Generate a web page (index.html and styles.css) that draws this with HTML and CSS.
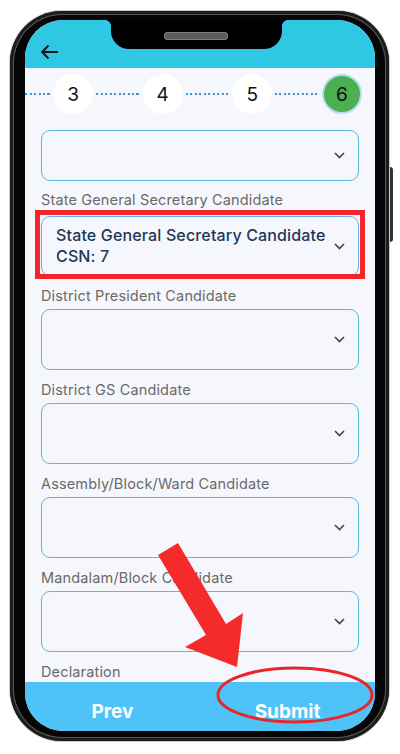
FILE: index.html
```html
<!DOCTYPE html>
<html lang="en">
<head>
    <meta charset="UTF-8">
    <meta name="viewport" content="width=device-width, initial-scale=1.0">
    <title>Candidate Nomination</title>
    <link rel="stylesheet" href="styles.css">
</head>
<body>

<div class="phone">
    <div class="side-button"></div>
    <div class="screen">
        <div class="notch"><span class="speaker"></span></div>

        <div class="app-header">
            <svg class="back" width="19" height="16" viewBox="0 0 19 16">
                <path d="M18 8 H2 M8.5 1.5 L2 8 L8.5 14.5" fill="none" stroke="#111" stroke-width="1.8"/>
            </svg>
        </div>

        <div class="steps">
            <span class="line line-first"></span>
            <span class="step">3</span>
            <span class="line"></span>
            <span class="step">4</span>
            <span class="line"></span>
            <span class="step">5</span>
            <span class="line"></span>
            <span class="step step-active">6</span>
        </div>

        <div class="form">
            <div class="select select-short">
                <span class="value"></span>
                <svg class="chevron" width="11" height="7" viewBox="0 0 11 7"><path d="M1 1 L5.5 5.5 L10 1" fill="none" stroke="#444" stroke-width="1.6"/></svg>
            </div>

            <label class="field-label field-label-gap">State General Secretary Candidate</label>
            <div class="select select-filled highlight">
                <span class="value">State General Secretary Candidate<br>CSN: 7</span>
                <svg class="chevron" width="11" height="7" viewBox="0 0 11 7"><path d="M1 1 L5.5 5.5 L10 1" fill="none" stroke="#444" stroke-width="1.6"/></svg>
            </div>

            <label class="field-label">District President Candidate</label>
            <div class="select">
                <span class="value"></span>
                <svg class="chevron" width="11" height="7" viewBox="0 0 11 7"><path d="M1 1 L5.5 5.5 L10 1" fill="none" stroke="#444" stroke-width="1.6"/></svg>
            </div>

            <label class="field-label">District GS Candidate</label>
            <div class="select">
                <span class="value"></span>
                <svg class="chevron" width="11" height="7" viewBox="0 0 11 7"><path d="M1 1 L5.5 5.5 L10 1" fill="none" stroke="#444" stroke-width="1.6"/></svg>
            </div>

            <label class="field-label">Assembly/Block/Ward Candidate</label>
            <div class="select">
                <span class="value"></span>
                <svg class="chevron" width="11" height="7" viewBox="0 0 11 7"><path d="M1 1 L5.5 5.5 L10 1" fill="none" stroke="#444" stroke-width="1.6"/></svg>
            </div>

            <label class="field-label">Mandalam/Block Candidate</label>
            <div class="select">
                <span class="value"></span>
                <svg class="chevron" width="11" height="7" viewBox="0 0 11 7"><path d="M1 1 L5.5 5.5 L10 1" fill="none" stroke="#444" stroke-width="1.6"/></svg>
            </div>

            <label class="field-label">Declaration</label>
        </div>

        <div class="bottom-bar">
            <button class="bar-btn">Prev</button>
            <button class="bar-btn">Submit</button>
        </div>
    </div>
</div>

<!-- annotation drawn over the screenshot -->
<svg class="annotation" width="400" height="754" viewBox="0 0 400 754">
    <polygon points="158,555 178,543 226,624 243,613 237,667 185,647 206,635" fill="#f52a2a"/>
    <ellipse cx="295" cy="695" rx="77" ry="27" fill="none" stroke="#e8262a" stroke-width="3"/>
</svg>

</body>
</html>
```

FILE: styles.css
```css
body {
    margin: 0;
    width: 400px;
    height: 754px;
    background-color: #fff;
    font-family: Inter, "Open Sans", sans-serif;
    position: relative;
    overflow: hidden;
}

.phone {
    position: relative;
    box-sizing: border-box;
    margin: 11px 0 0 10px;
    width: 379px;
    height: 730px;
    padding: 9px 14px 10px 15px;
    background-color: #060606;
    border-radius: 52px;
    box-shadow: 0 0 0 1px #c9c9c9, inset 0 0 0 3px #1c1c1c, inset 0 0 0 4px #5a5a5a;
}

.side-button {
    position: absolute;
    right: -4px;
    top: 156px;
    width: 3px;
    height: 75px;
    background-color: #333;
    border-radius: 0 3px 3px 0;
}

.screen {
    position: relative;
    width: 350px;
    height: 711px;
    border-radius: 38px;
    overflow: hidden;
    background-color: #f6f7fc;
    display: flex;
    flex-direction: column;
}

.notch {
    position: absolute;
    left: 86px;
    top: 0;
    width: 171px;
    height: 29px;
    background-color: #000;
    border-radius: 0 0 18px 18px;
}

/* small flares where the notch meets the top edge */
.notch::before,
.notch::after {
    content: "";
    position: absolute;
    top: 0;
    width: 7px;
    height: 7px;
}

.notch::before {
    left: -7px;
    background: radial-gradient(circle at 0 100%, transparent 7px, #000 7.5px);
}

.notch::after {
    right: -7px;
    background: radial-gradient(circle at 100% 100%, transparent 7px, #000 7.5px);
}

.speaker {
    position: absolute;
    left: 53px;
    top: 12px;
    width: 64px;
    height: 8px;
    border-radius: 4px;
    background-color: #5d5d5d;
    box-shadow: inset 0 0 0 1px #7c7c7c;
}

.app-header {
    height: 48px;
    flex-shrink: 0;
    background-color: #2ec8e4;
    box-sizing: border-box;
    padding: 24px 0 0 15px;
}

.back {
    display: block;
}

.steps {
    height: 52px;
    flex-shrink: 0;
    display: flex;
    align-items: center;
    padding-right: 13px;
}

.line {
    flex: 1;
    height: 2px;
    margin: 0 3px;
    background-image: repeating-linear-gradient(to right, #3f93dd 0 2px, transparent 2px 4.5px);
}

.line-first {
    flex: none;
    width: 25px;
    margin: 0 3px 0 0;
}

.step {
    width: 40px;
    height: 40px;
    box-sizing: border-box;
    border-radius: 50%;
    background-color: #fff;
    display: flex;
    align-items: center;
    justify-content: center;
    font-size: 19px;
    color: #111;
}

.step-active {
    background-color: #4caf50;
    border: 2px solid #b9dbf3;
}

.form {
    flex: 1;
    overflow: hidden;
    padding: 10px 16px 0;
}

.field-label {
    display: block;
    padding: 10px 0 3px;
    line-height: 20px;
    font-size: 14.5px;
    letter-spacing: 0.15px;
    color: #6a6a6a;
}

.field-label-gap {
    padding: 9px 0 6px;
}

.select {
    position: relative;
    height: 61px;
    box-sizing: border-box;
    border: 1.5px solid #5db7de;
    border-radius: 9px;
    display: flex;
    align-items: center;
    padding: 0 13px 0 14px;
}

.select-short {
    height: 51px;
}

.select-filled {
    height: 60px;
}

.value {
    flex: 1;
    font-size: 16px;
    line-height: 21px;
    font-weight: 500;
    letter-spacing: 0.15px;
    color: #1d3759;
}

.chevron {
    flex-shrink: 0;
}

.highlight::after {
    content: "";
    position: absolute;
    top: -7px;
    left: -7px;
    right: -7px;
    bottom: -4px;
    border: 5px solid #f4242a;
}

.bottom-bar {
    height: 49px;
    flex-shrink: 0;
    display: flex;
    background-color: #4fc3f7;
}

.bar-btn {
    flex: 1;
    border: none;
    background: none;
    padding: 10px 0 0;
    font-family: Inter, "Open Sans", sans-serif;
    font-size: 19px;
    font-weight: 700;
    color: #fff;
}

.annotation {
    position: absolute;
    top: 0;
    left: 0;
    pointer-events: none;
}
```
